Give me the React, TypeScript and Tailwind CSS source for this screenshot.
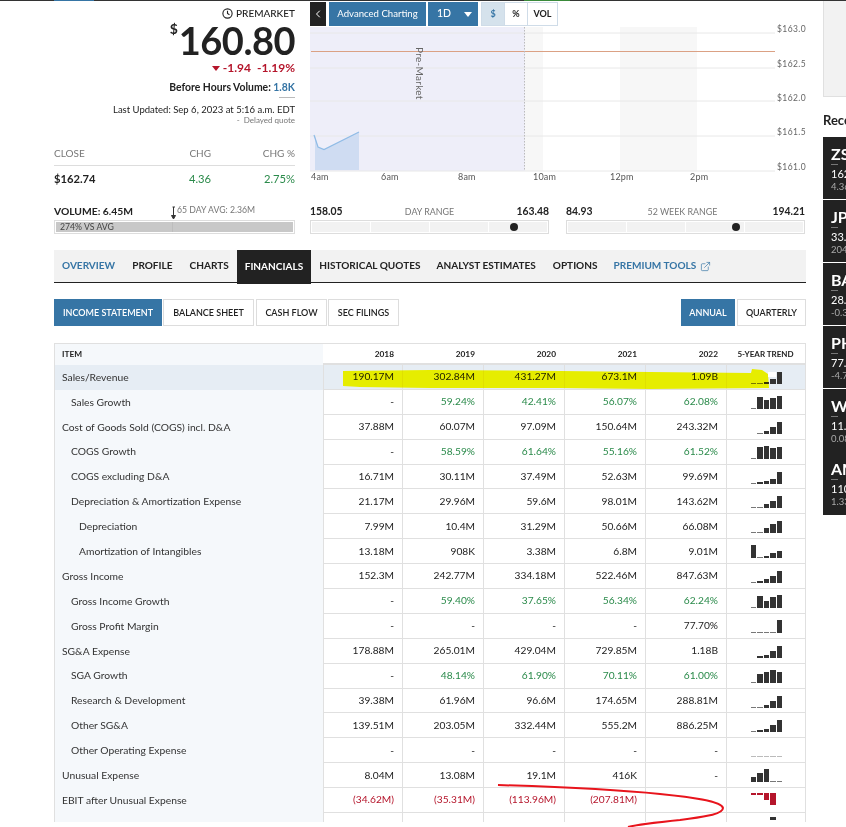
import { ChevronLeft, ExternalLink } from "lucide-react";

type Row = {
  label: string;
  indent?: number;
  values: string[];
  bars: number[];
  tone?: "green" | "red";
};

const rows: Row[] = [
  { label: "Sales/Revenue", values: ["190.17M", "302.84M", "431.27M", "673.1M", "1.09B"], bars: [1, 1, 2, 5, 12] },
  { label: "Sales Growth", indent: 1, tone: "green", values: ["-", "59.24%", "42.41%", "56.07%", "62.08%"], bars: [1, 12, 9, 11, 13] },
  { label: "Cost of Goods Sold (COGS) incl. D&A", values: ["37.88M", "60.07M", "97.09M", "150.64M", "243.32M"], bars: [0, 1, 3, 7, 12] },
  { label: "COGS Growth", indent: 1, tone: "green", values: ["-", "58.59%", "61.64%", "55.16%", "61.52%"], bars: [1, 12, 13, 11, 12] },
  { label: "COGS excluding D&A", indent: 1, values: ["16.71M", "30.11M", "37.49M", "52.63M", "99.69M"], bars: [1, 2, 3, 5, 12] },
  { label: "Depreciation & Amortization Expense", indent: 1, values: ["21.17M", "29.96M", "59.6M", "98.01M", "143.62M"], bars: [1, 1, 4, 7, 12] },
  { label: "Depreciation", indent: 2, values: ["7.99M", "10.4M", "31.29M", "50.66M", "66.08M"], bars: [1, 1, 5, 9, 12] },
  { label: "Amortization of Intangibles", indent: 2, values: ["13.18M", "908K", "3.38M", "6.8M", "9.01M"], bars: [13, 1, 2, 5, 7] },
  { label: "Gross Income", values: ["152.3M", "242.77M", "334.18M", "522.46M", "847.63M"], bars: [1, 2, 4, 7, 12] },
  { label: "Gross Income Growth", indent: 1, tone: "green", values: ["-", "59.40%", "37.65%", "56.34%", "62.24%"], bars: [1, 12, 7, 11, 13] },
  { label: "Gross Profit Margin", indent: 1, values: ["-", "-", "-", "-", "77.70%"], bars: [1, 1, 1, 1, 13] },
  { label: "SG&A Expense", values: ["178.88M", "265.01M", "429.04M", "729.85M", "1.18B"], bars: [0, 2, 3, 7, 12] },
  { label: "SGA Growth", indent: 1, tone: "green", values: ["-", "48.14%", "61.90%", "70.11%", "61.00%"], bars: [1, 9, 11, 13, 11] },
  { label: "Research & Development", indent: 1, values: ["39.38M", "61.96M", "96.6M", "174.65M", "288.81M"], bars: [1, 1, 3, 7, 12] },
  { label: "Other SG&A", indent: 1, values: ["139.51M", "203.05M", "332.44M", "555.2M", "886.25M"], bars: [1, 2, 3, 7, 12] },
  { label: "Other Operating Expense", indent: 1, values: ["-", "-", "-", "-", "-"], bars: [-1, -1, -1, -1, -1] },
  { label: "Unusual Expense", values: ["8.04M", "13.08M", "19.1M", "416K", "-"], bars: [5, 9, 13, 1, 1] },
  { label: "EBIT after Unusual Expense", tone: "red", values: ["(34.62M)", "(35.31M)", "(113.96M)", "(207.81M)", ""], bars: [2, 2, 7, 12, 0] },
];

const sideItems = [
  ["ZS", "162.74", "4.36"],
  ["JP", "33.", "204"],
  ["BA", "28.", "-0.3"],
  ["PH", "77.", "-4.7"],
  ["W", "11.", "0.08"],
  ["AM", "110", "1.33"],
];

function Trend({ bars, red }: { bars: number[]; red?: boolean }) {
  return (
    <div className={`flex gap-[1px] h-[14px] w-[31px] ${red ? "items-start" : "items-end"}`}>
      {bars.map((b, i) => {
        const flat = b === -1;
        const h = flat ? 1 : b;
        let color = b <= 1 ? "bg-[#777]" : "bg-[#333]";
        if (flat) color = "bg-[#bbb]";
        if (red) color = "bg-[#b5152b]";
        return <div key={i} className={`flex-1 ${color}`} style={{ height: h }} />;
      })}
    </div>
  );
}

function TableRow({ row, first }: { row: Row; first: boolean }) {
  const pad = row.indent === 2 ? "pl-[24px]" : row.indent === 1 ? "pl-[16px]" : "pl-[7px]";
  return (
    <div className="flex h-[24.9px] shrink-0">
      <div className={`w-[268px] flex items-center text-[10.3px] text-[#333] ${pad} ${first ? "bg-[#e6edf4]" : "bg-[#f5f8fb]"}`}>
        {row.label}
      </div>
      {row.values.map((v, i) => {
        let color = "text-[#222]";
        if (row.tone === "green" && v !== "-") color = "text-[#2a8a4a]";
        if (row.tone === "red") color = "text-[#b5152b]";
        return (
          <div
            key={i}
            className={`${i === 0 ? "w-[79px]" : "w-[81px]"} flex items-center justify-end pr-[8px] text-[10.2px] border-l border-b border-[#e0e0e0] ${color} ${first ? "bg-[#e6edf4]" : ""}`}
          >
            {v}
          </div>
        );
      })}
      <div className={`flex-1 flex items-center pl-[24px] border-l border-b border-[#e0e0e0] ${first ? "bg-[#e6edf4]" : ""}`}>
        <Trend bars={row.bars} red={row.tone === "red"} />
      </div>
    </div>
  );
}

function RangeBar({ label, low, high, dot }: { label: string; low: string; high: string; dot: number }) {
  return (
    <div className="w-[239px]">
      <div className="flex items-center justify-between h-[15px] -mt-[1px] text-[10.4px] font-bold text-[#222]">
        <span>{low}</span>
        <span className="text-[8.9px] font-normal text-[#777]">{label}</span>
        <span>{high}</span>
      </div>
      <div className="relative mt-[1px] h-[14px] flex gap-[1px] border border-[#ddd] bg-white p-[1px]">
        <div className="flex-1 bg-[#f2f2f2]" />
        <div className="flex-1 bg-[#f2f2f2]" />
        <div className="flex-1 bg-[#f2f2f2]" />
        <div className="flex-1 bg-[#f2f2f2]" />
        <div className="absolute top-[2px] w-[8px] h-[8px] rounded-full bg-[#222]" style={{ left: dot }} />
      </div>
    </div>
  );
}

function Chart() {
  const grid = [33, 68, 101, 136, 171];
  const prices = ["$163.0", "$162.5", "$162.0", "$161.5", "$161.0"];
  const labelY = [32, 67, 101, 135, 170];
  return (
    <svg width="496" height="155" viewBox="310 27 496 155" className="block overflow-visible">
      <rect x="310" y="27" width="215" height="144" fill="#eeeef9" />
      <rect x="525" y="27" width="18" height="144" fill="#f7f7f7" />
      <rect x="620" y="27" width="77" height="144" fill="#f7f7f7" />
      {grid.map((y) => (
        <line key={y} x1="310" x2="775" y1={y} y2={y} stroke="#e8e8e8" strokeWidth="1" />
      ))}
      <line x1="311" x2="775" y1="51.5" y2="51.5" stroke="#dba184" strokeWidth="1" />
      <line x1="524.5" x2="524.5" y1="27" y2="171" stroke="#bbb" strokeDasharray="1.5 1.5" />
      <path d="M315 135 L318 147 L324 149.5 L359 132 L359 170 L315 170 Z" fill="#cfdcf2" />
      <path d="M314 135 L318 147 L324 149.5 L359 132" fill="none" stroke="#8fbbe6" strokeWidth="1.2" />
      {prices.map((p, i) => (
        <text key={p} x="777" y={labelY[i]} fontSize="8.5" fill="#666" letterSpacing="0.4">{p}</text>
      ))}
      {[
        ["4am", 311],
        ["6am", 381],
        ["8am", 458],
        ["10am", 533],
        ["12pm", 610],
        ["2pm", 690],
      ].map(([t, x]) => (
        <text key={t} x={x} y="180" fontSize="9" fill="#555" letterSpacing="0.2">{t}</text>
      ))}
      <text x="0" y="0" fontSize="10" fill="#666" transform="translate(416 47) rotate(90)" letterSpacing="0.3">Pre-Market</text>
    </svg>
  );
}

export default function App() {
  return (
    <div className="relative w-[846px] h-[827px] overflow-hidden bg-white [font-family:Lato,sans-serif] text-[#222]">
      <div className="h-[822px] overflow-hidden">
        {/* Top strip */}
        <div className="flex h-[1px] bg-[#333]">
          <div className="ml-[54px] w-[40px] bg-[#3675a5]" />
          <div className="ml-[430px] w-[46px] bg-[#3a8a3a]" />
        </div>

        <div className="flex">
          <div className="ml-[54px] w-[752px] shrink-0">
            {/* Quote + chart */}
            <div className="flex h-[204px]">
              <div className="w-[241px] flex flex-col items-end">
                <div className="flex items-center gap-[3px] mt-[6px] h-[13px] text-[10px] font-medium">
                  <svg width="11" height="11" viewBox="0 0 10 10" fill="none" stroke="#222" strokeWidth="1">
                    <circle cx="5" cy="5" r="4.2" />
                    <path d="M5 2.5V5L6.8 6.2" />
                  </svg>
                  PREMARKET
                </div>
                <div className="flex items-start h-[41px]">
                  <span className="text-[14px] font-bold leading-none mt-[2px] mr-[1px]">$</span>
                  <span className="text-[38px] font-bold leading-[41px] tracking-[-0.5px]">160.80</span>
                </div>
                <div className="flex items-center h-[14px] text-[12px] font-bold text-[#b5152b]">
                  <span className="w-0 h-0 border-x-[4px] border-x-transparent border-t-[5px] border-t-[#b5152b] mr-[3px]" />
                  -1.94
                  <span className="ml-[6px]">-1.19%</span>
                </div>
                <div className="mt-[5px] h-[14px] text-[10.4px] font-bold leading-[14px]">
                  Before Hours Volume: <span className="text-[#3675a5]">1.8K</span>
                </div>
                <div className="mt-[3px] w-[16px] h-[1px] bg-[#bbb]" />
                <div className="mt-[6px] h-[12px] text-[9.5px] leading-[12px]">Last Updated: Sep 6, 2023 at 5:16 a.m. EDT</div>
                <div className="h-[9px] text-[8px] leading-[9px] text-[#777]">-&nbsp; Delayed quote</div>

                <div className="w-full mt-[21px] flex text-[10px] text-[#777] h-[14px] leading-[14px]">
                  <span className="w-[100px]">CLOSE</span>
                  <span className="w-[57px] text-right">CHG</span>
                  <span className="flex-1 text-right">CHG %</span>
                </div>
                <div className="w-full mt-[5px] border-t border-[#ddd] pt-[5px] flex text-[11.2px] h-[24px]">
                  <span className="w-[100px] font-bold">$162.74</span>
                  <span className="w-[57px] text-right text-[#2a8a4a]">4.36</span>
                  <span className="flex-1 text-right text-[#2a8a4a]">2.75%</span>
                </div>
              </div>

              <div className="ml-[15px] w-[496px]">
                <div className="flex h-[25px] mt-[1px]">
                  <div className="w-[16px] h-[24px] bg-[#222] text-white flex items-center justify-center">
                    <ChevronLeft size={12} strokeWidth={2} />
                  </div>
                  <div className="ml-[3px] w-[97px] h-[24px] bg-[#3675a5] text-white text-[9.6px] flex items-center justify-center">Advanced Charting</div>
                  <div className="ml-[2px] w-[50px] h-[24px] bg-[#3675a5] text-white text-[10.5px] font-medium flex items-center pl-[9px] gap-[13px]">
                    1D
                    <span className="w-0 h-0 border-x-[4px] border-x-transparent border-t-[5px] border-t-white" />
                  </div>
                  <div className="ml-[3px] flex h-[24px] border border-[#cfdce8] text-[9px] font-bold">
                    <div className="w-[22px] bg-[#d5e2ec] text-[#3675a5] flex items-center justify-center">$</div>
                    <div className="w-[23px] border-l border-[#cfdce8] flex items-center justify-center">%</div>
                    <div className="w-[30px] border-l border-[#cfdce8] flex items-center justify-center">VOL</div>
                  </div>
                </div>
                <Chart />
              </div>
            </div>

            {/* Volume + ranges */}
            <div className="flex h-[45px]">
              <div className="w-[241px]">
                <div className="flex h-[15px] -mt-[1px] items-center">
                  <span className="w-[117px] text-[10.3px] font-bold">VOLUME: 6.45M</span>
                  <svg width="5" height="14" viewBox="0 0 5 14" className="mt-[2px]" fill="none" stroke="#333" strokeWidth="1">
                    <path d="M1.5 1H4M2.5 1V11" />
                    <path d="M0.5 9.5L2.5 13L4.5 9.5Z" fill="#333" />
                  </svg>
                  <span className="ml-[1px] -mt-[3px] text-[8.7px] text-[#777]">65 DAY AVG: 2.36M</span>
                </div>
                <div className="mt-[1px] h-[14px] border border-[#ddd] p-[1px]">
                  <div className="h-full bg-[#c8c8c8] flex text-[8.7px] text-[#444]">
                    <div className="w-[117px] pl-[4px] flex items-center border-r border-[#bdbdbd]">274% VS AVG</div>
                  </div>
                </div>
              </div>
              <div className="ml-[15px] flex gap-[17px]">
                <RangeBar label="DAY RANGE" low="158.05" high="163.48" dot={199} />
                <RangeBar label="52 WEEK RANGE" low="84.93" high="194.21" dot={165} />
              </div>
            </div>

            {/* Tabs */}
            <div className="flex h-[33px] bg-[#f2f2f2] border-b border-[#222] text-[10.05px] font-bold">
              <div className="pl-[8px] pr-[9px] flex items-center text-[#3675a5]">OVERVIEW</div>
              <div className="pl-[8px] pr-[9px] flex items-center">PROFILE</div>
              <div className="px-[8px] flex items-center">CHARTS</div>
              <div className="px-[8px] h-[34px] flex items-center bg-[#222] text-white">FINANCIALS</div>
              <div className="px-[8px] flex items-center">HISTORICAL QUOTES</div>
              <div className="px-[8px] flex items-center">ANALYST ESTIMATES</div>
              <div className="pl-[9px] pr-[8px] flex items-center">OPTIONS</div>
              <div className="px-[8px] flex items-center gap-[4px] text-[#3675a5]">
                PREMIUM TOOLS
                <ExternalLink size={11} strokeWidth={1.5} />
              </div>
            </div>

            {/* Statement tabs */}
            <div className="flex justify-between mt-[16px] h-[27px] text-[9px] font-semibold">
              <div className="flex gap-[1px]">
                <div className="w-[108px] bg-[#3675a5] text-white flex items-center justify-center">INCOME STATEMENT</div>
                <div className="w-[91px] border border-[#ddd] flex items-center justify-center">BALANCE SHEET</div>
                <div className="w-[71px] ml-[1px] border border-[#ddd] flex items-center justify-center">CASH FLOW</div>
                <div className="w-[71px] border border-[#ddd] flex items-center justify-center">SEC FILINGS</div>
              </div>
              <div className="flex gap-[2px]">
                <div className="w-[54px] bg-[#3675a5] text-white flex items-center justify-center">ANNUAL</div>
                <div className="w-[69px] border border-[#ddd] flex items-center justify-center">QUARTERLY</div>
              </div>
            </div>

            {/* Table */}
            <div className="relative mt-[17px] border-t border-l border-r border-[#e0e0e0]">
              <div className="flex h-[21px] text-[8.3px] font-bold">
                <div className="w-[268px] bg-[#f5f8fb] flex items-center pl-[7px]">ITEM</div>
                {["2018", "2019", "2020", "2021", "2022"].map((y, i) => (
                  <div key={y} className={`${i === 0 ? "w-[79px]" : "w-[81px]"} flex items-center justify-end pr-[8px] pt-[1px] border-b-2 border-[#e0e0e0]`}>{y}</div>
                ))}
                <div className="flex-1 flex items-center justify-center pt-[1px] border-b-2 border-[#e0e0e0] text-[8px]">5-YEAR TREND</div>
              </div>
              {rows.map((r, i) => (
                <TableRow key={r.label} row={r} first={i === 0} />
              ))}
              <div className="flex h-[24.9px]">
                <div className="w-[268px] bg-[#f5f8fb]" />
                {[0, 1, 2, 3, 4].map((i) => (
                  <div key={i} className={`${i === 0 ? "w-[79px]" : "w-[81px]"} border-l border-[#e0e0e0]`} />
                ))}
                <div className="flex-1 border-l border-[#e0e0e0] pl-[24px]">
                  <div className="ml-[19px] w-[6px] h-[3px] mt-[4px] bg-[#333]" />
                </div>
              </div>
            </div>
          </div>

          {/* Right rail */}
          <div className="ml-[17px] w-[23px] shrink-0 overflow-hidden">
            <div className="h-[96px] bg-[#f2f2f2] border-l border-b border-[#e0e0e0]" />
            <div className="mt-[15px] h-[17px] text-[13px] font-bold leading-[17px] whitespace-nowrap">Recent</div>
            <div className="mt-[8px] bg-[#222] text-white whitespace-nowrap">
              {sideItems.map(([t, a, b], i) => (
                <div key={t} className={`h-[63px] pl-[8px] pt-[8px] ${i < 4 ? "border-b border-white" : ""}`}>
                  <div className="text-[16px] font-bold leading-[18px]">{t}</div>
                  <div className="w-[7px] h-[1px] bg-[#777] mt-[1px]" />
                  <div className="text-[11px] leading-[14px] mt-[2px]">{a}</div>
                  <div className="text-[9.5px] leading-[12px] text-[#aaa]">{b}</div>
                </div>
              ))}
            </div>
          </div>
        </div>
      </div>

      {/* Hand-drawn marks on top of the screenshot */}
      <svg width="846" height="827" viewBox="0 0 846 827" className="absolute left-0 top-0 pointer-events-none">
        <path
          d="M343 371 L430 370 L560 371 L650 372 L751 373 L752 369 L762 370 L768 374 L769 388 L650 389 L560 388 L430 388 L360 387 L343 386 Z"
          fill="#ffff00"
          style={{ mixBlendMode: "multiply" }}
        />
        <rect x="768" y="372" width="8" height="5" fill="#fff" />
        <path
          d="M498 785 C560 787 620 790 660 794 C690 797 722 801 723 808 C723 815 700 817 680 820 C660 822 640 824 628 827"
          fill="none"
          stroke="#e8141c"
          strokeWidth="2"
        />
      </svg>
    </div>
  );
}
